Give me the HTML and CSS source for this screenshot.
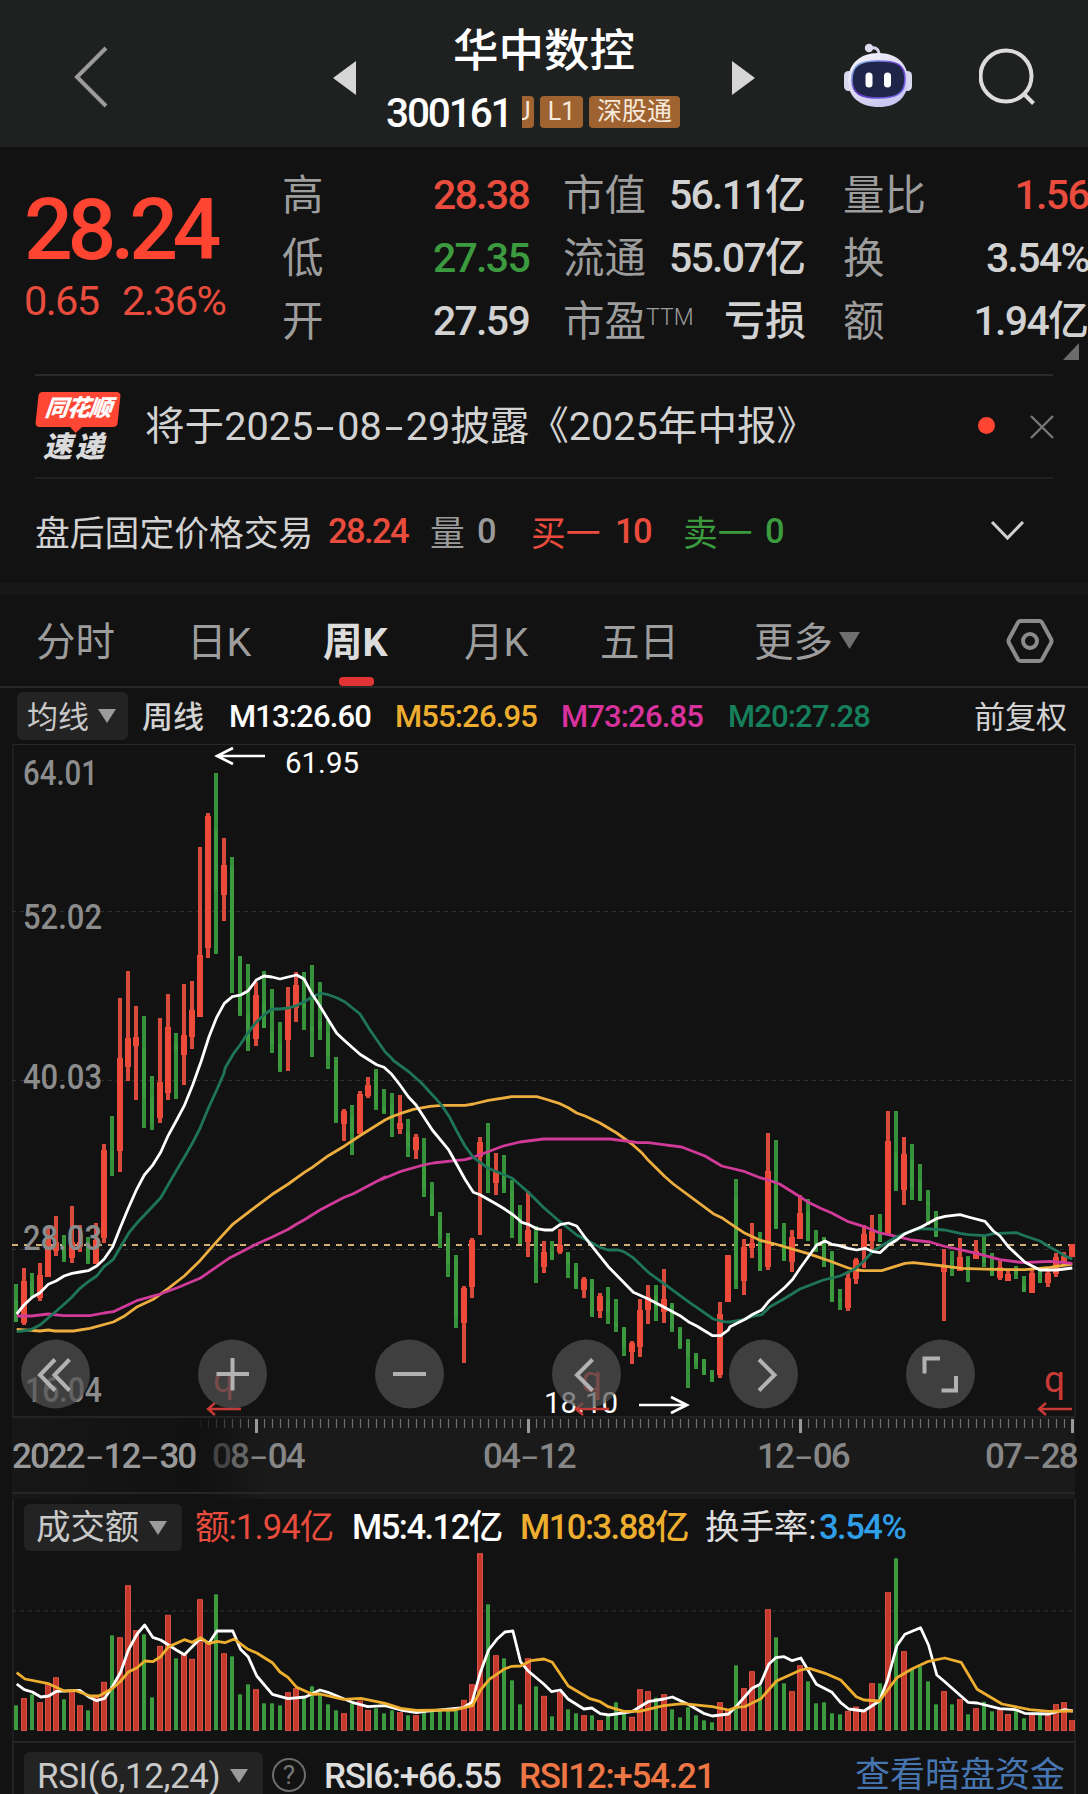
FILE: index.html
```html
<!DOCTYPE html>
<html lang="zh-CN">
<head>
<meta charset="utf-8">
<title>华中数控 300161</title>
<link rel="stylesheet" href="styles.css">
</head>
<body>
<header class="topbar">
  <div class="topbar-left">
    <svg class="back" width="38" height="64" viewBox="0 0 38 64"><path d="M34 3 5 32 34 61"/></svg>
  </div>
  <div class="topbar-center">
    <svg width="23" height="34" viewBox="0 0 23 34"><path d="M23 0V34L0 17Z" fill="#d6d6d6"/></svg>
    <div class="stock">
      <h1>华中数控</h1>
      <div class="stock-sub"><span class="code">300161</span><span class="tag tag-cut">J</span><span class="tag tag-l1">L1</span><span class="tag tag-sz">深股通</span></div>
    </div>
    <svg width="23" height="34" viewBox="0 0 23 34"><path d="M0 0V34L23 17Z" fill="#d6d6d6"/></svg>
  </div>
  <div class="topbar-right">
    <svg width="70" height="66" viewBox="0 0 70 66">
      <defs>
        <linearGradient id="shell" x1="0" y1="0" x2="0.6" y2="1"><stop offset="0" stop-color="#f6f5fb"/><stop offset=".6" stop-color="#dcdaf2"/><stop offset="1" stop-color="#c9c6f0"/></linearGradient>
        <linearGradient id="rim" x1="0" y1="0" x2="1" y2="1"><stop offset="0" stop-color="#7fc4e8"/><stop offset=".5" stop-color="#6a35c8"/><stop offset="1" stop-color="#6b6fe8"/></linearGradient>
      </defs>
      <path d="M27 5C33 4 36 6 36 12" fill="none" stroke="#d5d3ea" stroke-width="3"/>
      <circle cx="26" cy="5" r="4.2" fill="#dddaf0"/>
      <rect x="1" y="28" width="9" height="20" rx="4.5" fill="#d9d8ef"/>
      <rect x="60" y="28" width="9" height="20" rx="4.5" fill="#d9d8ef"/>
      <path d="M35 10C54 10 65 21 65 37C65 54 54 64 36 64C17 64 5 54 5 38C5 21 17 10 35 10Z" fill="url(#shell)"/>
      <path d="M35 18C53 18 62 21 62 36C62 51 53 55 36 55C18 55 9 51 9 37C9 21 18 18 35 18Z" fill="#1e2548" stroke="url(#rim)" stroke-width="1.6"/>
      <rect x="22.500" y="29.500" width="7" height="15" rx="3.500" fill="#fff"/>
      <rect x="41" y="29.500" width="7" height="15" rx="3.500" fill="#fff"/>
    </svg>
    <svg width="58" height="58" viewBox="0 0 58 58" fill="none" stroke="#dcdcdc" stroke-width="4"><circle cx="27" cy="28" r="25.500"/><path d="M44.500 45.500 54.500 55.500"/></svg>
  </div>
</header>

<section class="quote">
  <div class="price-box">
    <div class="price">28.24</div>
    <div class="change"><span>0.65</span><span>2.36%</span></div>
  </div>
  <dl class="col col-a">
    <dt>高</dt><dd class="up">28.38</dd>
    <dt>低</dt><dd class="down">27.35</dd>
    <dt>开</dt><dd>27.59</dd>
  </dl>
  <dl class="col col-b">
    <dt>市值</dt><dd>56.11<i>亿</i></dd>
    <dt>流通</dt><dd>55.07<i>亿</i></dd>
    <dt>市盈<sup>TTM</sup></dt><dd><i>亏损</i></dd>
  </dl>
  <dl class="col col-c">
    <dt>量比</dt><dd class="up">1.56</dd>
    <dt>换</dt><dd>3.54%</dd>
    <dt>额</dt><dd>1.94<i>亿</i></dd>
  </dl>
  <svg class="corner" width="16" height="17" viewBox="0 0 16 17"><path d="M16 0V17H0Z" fill="#6c6c6c"/></svg>
</section>

<section class="news">
  <div class="news-logo">
    <div class="logo-top">同花顺</div>
    <div class="logo-bottom">速递</div>
  </div>
  <p>将于2025<b>-</b>08<b>-</b>29披露《2025年中报》</p>
  <span class="dot"></span>
  <svg width="24" height="24" viewBox="0 0 24 24" stroke="#777" stroke-width="2.400"><path d="M1 1 23 23M23 1 1 23"/></svg>
</section>

<section class="after-hours">
  <span>盘后固定价格交易</span><span class="up num">28.24</span><span class="muted">量</span><span class="muted num">0</span><span class="up">买一</span><span class="up num">10</span><span class="down">卖一</span><span class="down num">0</span>
  <svg width="35" height="21" viewBox="0 0 35 21" fill="none" stroke="#d0d0d0" stroke-width="3"><path d="M2 2 17.500 18 33 2"/></svg>
</section>

<div class="divider"></div>

<nav class="tabs">
  <a>分时</a><a>日K</a><a class="active">周K</a><a>月K</a><a>五日</a><a>更多<svg width="21" height="17" viewBox="0 0 21 17"><path d="M0 0H21L10.500 17Z" fill="#6f6f6f"/></svg></a>
  <svg class="gear" width="48" height="44" viewBox="0 0 48 44" fill="none" stroke="#8b8b8b" stroke-width="4"><path d="M14.500 2H33.500Q35 2 36 3.500L45 20Q46 22 45 24L36 40.500Q35 42 33.500 42H14.500Q13 42 12 40.500L3 24Q2 22 3 20L12 3.500Q13 2 14.500 2Z"/><circle cx="24" cy="22" r="7"/></svg>
</nav>

<div class="ma-row">
  <span class="select"><span>均线</span><svg width="18" height="14" viewBox="0 0 18 14"><path d="M0 0H18L9 14Z" fill="#9b9b9b"/></svg></span>
  <span class="period">周线</span>
  <span class="ma white">M13:26.60</span><span class="ma yellow">M55:26.95</span><span class="ma pink">M73:26.85</span><span class="ma teal">M20:27.28</span>
  <span class="adjust">前复权</span>
</div>

<main class="panels">
  <section class="kline">
    <svg id="kline" width="1088" height="674" viewBox="0 744 1088 674"></svg>
    <svg class="controls" width="1088" height="80" viewBox="0 1334 1088 80">
      <g class="discs"><circle cx="55.500" cy="1374" r="34.500"/><circle cx="232.500" cy="1374" r="34.500"/><circle cx="409.500" cy="1374" r="34.500"/><circle cx="586.500" cy="1374" r="34.500"/><circle cx="763.500" cy="1374" r="34.500"/><circle cx="940.500" cy="1374" r="34.500"/></g>
      <g class="glyphs">
        <path d="M55 1359.500 40 1375 55 1390.500M69.500 1359.500 54.500 1375 69.500 1390.500"/>
        <path d="M216.500 1374H249M232.500 1358V1390.500"/>
        <path d="M393 1374H426"/>
        <path d="M592.500 1359.500 577 1375 592.500 1390.500"/>
        <path d="M759 1359.500 774.500 1375 759 1390.500"/>
        <path d="M924.500 1373.500V1358.500H940M956 1376V1390.500H941.500"/>
      </g>
    </svg>
  </section>
  <section class="axis">
    <svg id="ticks" width="1063" height="16" viewBox="12 1417 1063 16"></svg>
    <div class="dates"><span class="start">2022<b>-</b>12<b>-</b>30</span><span class="faded"><i class="dim-2">0</i><i class="dim-1">8</i><b>-</b>04</span><span>04<b>-</b>12</span><span>12<b>-</b>06</span><span>07<b>-</b>28</span></div>
  </section>
  <section class="volume">
    <div class="vol-row">
      <span class="select"><span>成交额</span><svg width="18" height="14" viewBox="0 0 18 14"><path d="M0 0H18L9 14Z" fill="#9b9b9b"/></svg></span>
      <span class="red">额:1.94亿</span><span class="white">M5:4.12亿</span><span class="yellow">M10:3.88亿</span><span class="light">换手率:</span><span class="blue">3.54%</span>
    </div>
    <svg id="volume" width="1088" height="190" viewBox="0 1551 1088 190"></svg>
  </section>
  <section class="rsi">
    <span class="select"><span>RSI(6,12,24)</span><svg width="18" height="14" viewBox="0 0 18 14"><path d="M0 0H18L9 14Z" fill="#9b9b9b"/></svg></span>
    <span class="help">?</span>
    <span class="light rsi6">RSI6:+66.55</span><span class="orange">RSI12:+54.21</span>
    <a class="link">查看暗盘资金</a>
  </section>
</main>
<script src="chart.js"></script>
</body>
</html>
```
FILE: styles.css
```css
* { box-sizing: border-box; margin: 0; padding: 0; }
body {
  width: 1088px; height: 1794px; overflow: hidden;
  background: #121212; color: #d2d2d2;
  font-family: Roboto, "Noto Sans CJK SC", sans-serif;
}
svg { display: block; flex: none; }
span, a, dt, dd { white-space: nowrap; }
i { font-style: normal; }
dd i { letter-spacing: 0; }
.up { color: #e94c3d; }
.down { color: #3b9b3e; }
.muted { color: #9a9a9a; }
.white { color: #fff; }
.yellow { color: #edae2f; }
.pink { color: #d8329c; }
.teal { color: #16805c; }
.red { color: #e94c3d; }
.blue { color: #2f9fe8; }
.light { color: #dedede; }
.orange { color: #ee7544; }

.topbar { height: 147px; background: #1f2120; display: grid; grid-template-columns: 333px 422px 333px; }
.topbar-left { padding: 45px 0 0 72px; }
.back { fill: none; stroke: #9b9b9b; stroke-width: 4; }
.topbar-center { display: flex; justify-content: space-between; padding-top: 61px; }
.stock { width: 310px; margin-top: -35px; }
.stock h1 { font-size: 45.500px; line-height: 52px; font-weight: 500; color: #fff; text-align: center; }
.stock-sub { display: flex; align-items: center; height: 32px; margin: 18px 0 0 -3px; }
.code { font-size: 40.500px; line-height: 32px; color: #fff; width: 136px; letter-spacing: -2.100px; font-weight: 500; margin-top: 1px; }
.tag { height: 32px; background: #9f6331; border-radius: 4px; color: #f6e9dc; font-size: 25px; line-height: 32px; text-align: center; }
.tag-cut { width: 12px; border-radius: 0 4px 4px 0; overflow: hidden; text-indent: -8px; margin-right: 6px; }
.tag-l1 { width: 43px; margin-right: 6px; }
.tag-sz { width: 91px; }
.topbar-right { display: flex; padding: 43px 0 0 88px; gap: 66px; align-items: flex-start; }
.topbar-right svg + svg { margin-top: 5px; }

.quote { height: 227px; display: grid; grid-template-columns: 282px 246px 35px 243px 37px 245px; position: relative; padding-top: 16.500px; }
.price-box { padding-left: 24px; color: #ff4432; }
.price { font-size: 86px; line-height: 66px; font-weight: 500; letter-spacing: -5.500px; margin-top: 33px; }
.change { display: flex; margin-top: 20px; color: #e94c3d; font-size: 41.500px; line-height: 36px; letter-spacing: -1.600px; }
.change span:first-child { width: 98px; }
.col { display: grid; grid-template-columns: 0 1fr; grid-auto-rows: 63px; align-items: center; font-size: 41.500px; line-height: 63px; }
.col-a { grid-column: 2; }
.col-b { grid-column: 4; }
.col-c { grid-column: 6; }
.col dt { color: #9d9d9d; }
.col dd { text-align: right; font-weight: 500; letter-spacing: -1.700px; font-size: 41px; }
.col-a dd { margin-right: -1px; }
.col-c dd { margin-right: -1px; }
.col sup { font-size: 23px; line-height: 20px; font-weight: 300; vertical-align: 11px; }
.corner { position: absolute; left: 1063px; top: 196px; }

.news { height: 105px; margin: 0 35px; border-top: 2px solid #2b2b2b; border-bottom: 2px solid #222; display: flex; align-items: center; }
.news-logo { flex: none; width: 86px; height: 70px; margin-right: 24px; font-weight: 900; font-style: italic; }
.logo-top { position: relative; width: 82px; height: 35px; margin-left: 2px; background: #ff4635; border-radius: 4px; color: #fff; font-size: 23px; line-height: 34px; letter-spacing: -1px; text-align: center; transform: skewX(-6deg); }
.logo-top::after { content: ""; position: absolute; left: 35px; top: 35px; border: 6px solid transparent; border-top-color: #ff4635; border-bottom: 0; }
.logo-bottom { font-size: 29px; line-height: 32px; letter-spacing: 3px; padding: 4px 0 0 8px; color: #dadada; }
.news p { flex: none; width: 806px; font-size: 39.600px; line-height: 60px; white-space: nowrap; }
.news b, .dates b { display: inline-block; width: 24px; text-align: center; font-weight: 400; transform: scaleX(1.700); }
.dot { width: 17px; height: 17px; border-radius: 50%; background: #ff4432; margin: -2px 35px 0 27px; flex: none; }

.after-hours { height: 104px; display: grid; grid-template-columns: 293px 102px 47px 54px 84px 68px 82px 225px 35px; align-items: center; margin-left: 35px; font-size: 34.800px; padding-bottom: 1px; }
.after-hours .num { letter-spacing: -1.600px; font-size: 34.500px; font-weight: 500; }
.divider { height: 12px; background: #171717; }

.tabs { height: 93px; border-bottom: 2px solid #282828; display: grid; grid-template-columns: 151px 136px 141px 136px 154px 252px 48px; align-items: center; padding-left: 36px; font-size: 39.500px; color: #9d9d9d; }
.tabs a { position: relative; height: 91px; line-height: 91px; padding-top: 4px; display: flex; align-items: center; }
.tabs a svg { margin: -5px 0 0 6px; }
.gear { margin-top: 1px; }
.tabs .active { color: #dcdcdc; font-weight: 700; }
.tabs .active::after { content: ""; position: absolute; left: 16px; bottom: 0; width: 35px; height: 9px; border-radius: 4px; background: #e03434; }

.ma-row { height: 56px; display: grid; grid-template-columns: 125px 87px 166px 166px 167px 246px auto; align-items: center; padding-left: 17px; font-size: 31px; }
.select { display: flex; align-items: center; justify-content: space-between; background: #232323; border-radius: 6px; height: 48px; color: #c8c8c8; }
.ma-row .select { width: 111px; padding: 0 12px 0 10px; }
.ma-row .select span, .period, .adjust { margin-top: -4px; }
.ma-row .period { font-weight: 500; }
.ma { letter-spacing: -.850px; font-weight: 500; }

.kline { position: relative; height: 674px; }
.controls { position: absolute; left: 0; top: 590px; }
.discs { fill: #525252; fill-opacity: .7; }
.glyphs { fill: none; stroke: #b2b2b2; stroke-width: 4; }
.axis-label { font-size: 34.500px; font-weight: 500; fill: #8c8c8c; }
.mark { font-size: 30px; fill: #fff; }
.event { font-size: 37px; fill: #c93a36; }

.axis { height: 81px; width: 1063px; margin-left: 12px; background: linear-gradient(90deg, #171717 0, #111 185px, #131313 205px, #1a1a1a 255px); }
.dates { display: flex; height: 60px; line-height: 46px; font-size: 35px; font-weight: 500; color: #868686; letter-spacing: -2px; border-bottom: 2px solid #262626; }
.dates b { width: 20px; text-indent: -1px; }
.dates span { flex: none; width: 91px; margin-right: 183px; }
.dates .start { width: 184px; margin-right: 16px; color: #999; }
.dates .faded { margin-right: 180px; }
.dates span:last-child { margin: 0 0 0 -46px; }
.dim-2 { color: #444; }
.dim-1 { color: #646464; }

.volume { height: 242px; }
.vol-row { height: 52px; width: 1064px; margin-left: 12px; border: solid #222; border-width: 0 2px; display: grid; grid-template-columns: 171px 157px 168px 185px 114px auto; padding: 5px 0 0 10px; font-size: 34.500px; line-height: 47px; }
.vol-row .select { width: 158px; height: 47px; padding: 0 15px 0 12px; }
.vol-row > span { letter-spacing: -1.500px; font-weight: 500; }
.vol-row > .select, .vol-row > .light { letter-spacing: -.100px; font-weight: 400; }
.vol-row > .red { letter-spacing: -.900px; font-weight: 400; }

.rsi { height: 53px; width: 1064px; margin-left: 12px; border: 2px solid #242424; border-bottom: 0; display: flex; padding: 9px 0 0 10px; font-size: 35px; line-height: 49px; }
.rsi .select { width: 239px; padding: 0 15px 0 13px; letter-spacing: -.400px; }
.help { width: 34px; height: 34px; border: 2px solid #6c6c6c; border-radius: 50%; color: #777; font-size: 26px; line-height: 31px; text-align: center; margin: 6px 18px 0 9px; }
.rsi .rsi6, .rsi .orange { width: 195px; letter-spacing: -1.300px; font-weight: 500; }
.rsi .orange { width: 336px; }
.rsi .link { color: #4775b0; margin-top: -1px; }
```
FILE: chart.js
```js
const RED = '#ee4a39', GREEN = '#3b9b3e', STEP = 8, X0 = 16;

// One weekly candle per entry: colour, high, body top, body bottom, low (chart y).
const candles = `G1284,1300,1322,1322 R1268,1281,1323,1325 G1273,1281,1295,1297 R1263,1275,1298,1301 R1227,1237,1277,1277 R1216,1242,1251,1256 G1235,1250,1259,1262 R1206,1242,1258,1263 R1225,1242,1247,1252 G1237,1243,1260,1264
R1223,1240,1264,1264 R1144,1150,1238,1243 G1116,1151,1159,1176 R998,1058,1151,1172 R971,1038,1067,1081 R1006,1037,1046,1100 G1016,1049,1098,1128 G1076,1097,1122,1130 R1018,1082,1118,1123 R994,1027,1093,1100
G1033,1042,1050,1099 R984,1035,1055,1085 R981,1010,1037,1049 R847,955,1017,1017 R813,816,948,958 G773,830,891,954 R838,865,895,921 G857,866,960,993 G956,956,1014,1016 G964,1014,1042,1051
R982,995,1039,1046 G971,1002,1028,1028 G989,1031,1044,1053 G1022,1044,1070,1072 R987,1007,1040,1071 R972,985,1008,1022 G972,999,1008,1030 G965,1027,1031,1057 G982,1021,1029,1040 G1020,1033,1056,1069
G1057,1060,1121,1123 R1109,1111,1124,1141 G1105,1117,1133,1155 R1091,1094,1134,1134 R1077,1085,1096,1098 G1069,1072,1107,1110 G1089,1107,1112,1114 G1093,1103,1119,1137 R1095,1123,1129,1134 G1119,1132,1147,1157
R1134,1137,1150,1159 G1138,1166,1190,1197 G1182,1194,1216,1216 G1212,1217,1238,1248 G1233,1238,1264,1277 G1255,1258,1318,1328 R1286,1288,1323,1363 R1238,1240,1287,1298 R1137,1142,1157,1235 G1123,1152,1168,1193
R1153,1172,1183,1195 G1155,1173,1189,1193 G1180,1191,1217,1238 G1205,1212,1242,1244 R1191,1230,1242,1257 G1226,1232,1262,1283 R1241,1252,1267,1273 G1241,1251,1258,1260 R1229,1245,1252,1254 G1252,1253,1265,1278
G1263,1269,1287,1289 R1277,1279,1290,1298 G1279,1281,1315,1317 R1293,1296,1311,1318 G1287,1300,1313,1324 G1299,1322,1327,1332 G1327,1329,1347,1356 R1341,1343,1352,1364 R1299,1310,1347,1357 R1285,1297,1310,1324
G1285,1295,1307,1321 R1269,1299,1312,1323 G1303,1305,1329,1332 G1327,1329,1347,1349 G1339,1342,1357,1388 G1353,1355,1364,1369 G1359,1361,1374,1375 G1370,1372,1379,1382 R1302,1314,1375,1378 R1255,1255,1302,1302
G1179,1198,1280,1289 R1239,1247,1281,1295 R1223,1243,1248,1258 G1232,1244,1270,1271 R1133,1171,1267,1270 G1140,1186,1228,1229 G1223,1242,1260,1261 R1230,1237,1262,1272 R1195,1213,1239,1239 G1199,1212,1240,1241
G1230,1242,1245,1252 G1237,1246,1257,1267 G1251,1253,1301,1302 G1289,1299,1302,1310 R1271,1278,1308,1311 R1258,1260,1279,1284 R1225,1234,1250,1268 R1215,1231,1241,1252 G1214,1231,1242,1242 R1111,1141,1234,1234
G1111,1152,1189,1191 R1137,1154,1190,1205 G1144,1160,1187,1200 G1164,1181,1200,1201 G1190,1202,1205,1225 G1211,1217,1236,1237 R1249,1267,1272,1321 G1251,1260,1264,1276 R1238,1257,1271,1271 G1256,1258,1270,1282
R1240,1251,1259,1259 G1236,1257,1263,1267 G1253,1267,1275,1276 R1261,1267,1278,1280 R1269,1274,1281,1281 G1266,1271,1274,1279 G1276,1282,1291,1292 R1269,1273,1293,1293 G1269,1271,1283,1283 R1271,1273,1283,1287
R1253,1257,1274,1277 R1252,1256,1263,1264 R1244,1244,1257,1257`.split(/\s+/);

// Bar heights in thirds of a pixel, oldest week first.
const volumes = [74,97,107,85,142,160,92,120,76,59,102,146,284,280,436,301,287,98,254,347,215,230,215,394,262,407,232,221,107,137,124,80,80,74,115,127,97,131,112,77,59,52,80,90,62,65,50,59,55,44,46,59,59,59,59,59,92,139,532,377,226,215,149,77,217,131,104,41,115,62,50,46,44,31,44,83,52,41,124,118,97,109,62,38,68,44,29,23,85,62,194,127,178,132,364,278,140,118,196,146,80,83,50,47,59,72,59,142,140,415,515,238,182,191,146,77,118,77,94,47,67,85,56,62,49,62,35,49,49,46,79,85,31];

// Curves, traced in three windows; each window has its own origin and scale.
const W = { top: [0, 740, 1/3, 1/3], left: [0, 1060, 1/3, 1/3], mid: [380, 1060, 1/3, 1/3], right: [730, 1060, 1/3, 1/3], volL: [0, 1480, .347, 1/3], volR: [544, 1480, .347, 1/3] };
const averages = [
  ['#fff', ['left', '50,762 72,735 97,712 120,698 145,673 168,663 192,648 216,640 240,636 265,632 290,618 312,598 338,560 360,505 385,445 410,388 433,345 457,317 482,277 505,226 530,180 553,137 578,75'],
    ['top', '603,965 627,890 650,832 673,790 697,770 722,765 745,752 769,720 792,708 816,711 840,717 864,711 890,705 912,717 935,760 958,795 984,838 1010,880 1035,903 1080,943 1130,974'],
    ['mid', '12,22 35,43 60,75 85,110 108,135 157,210 205,268 230,313 255,358 280,397 300,404 350,433 375,448 400,465 425,487 445,493 470,506 495,510 517,510 540,494 565,489 590,498 612,528 637,560 685,620 760,697 805,717 850,740 900,767 925,785 950,798 998,827 1022,827 1045,810'],
    ['right', '0,800 45,778 70,762 95,750 118,722 165,682 188,658 210,625 235,590 260,555 285,543 305,553 325,556 355,565 380,570 405,565 430,575 450,578 475,555 500,540 525,521 575,500 622,475 645,469 690,464 715,471 765,484 790,513 810,528 835,560 885,607 930,630 980,630 1027,624']],
  ['#edae3f', ['left', '50,808 120,813 145,810 165,813 220,813 270,805 340,786 375,767 412,740 460,718 505,685 553,648 600,602 650,545 697,494 745,457 817,403 865,372 912,338 937,322 985,287 1035,257 1083,225 1155,180'],
    ['mid', '35,170 60,161 100,148 150,139 185,136 255,136 280,132 325,121 395,110 470,110 495,117 540,131 565,143 590,159 615,168 660,189 710,219 758,254 785,278 805,301 855,350 880,372 1000,461 1025,473'],
    ['right', '0,490 45,520 90,541 135,552 235,581 285,598 355,624 380,630 400,632 455,632 525,610 550,608 640,618 695,625 790,628 885,629 960,622 1027,612']],
  ['#d03a98', ['left', '50,768 95,768 145,762 190,767 270,767 312,759 340,755 410,722 475,704 530,684 600,655 690,593 770,552 817,531 865,508 890,492 912,480 960,450 1030,413 1060,401 1155,351'],
    ['mid', '0,360 60,335 130,315 160,309 230,301 255,299 280,292 370,258 420,246 490,237 690,237 775,248 805,248 850,254 905,261 975,288 1025,318'],
    ['right', '0,324 45,335 90,353 115,360 150,373 210,410 235,427 270,444 305,459 355,485 400,499 450,519 475,524 545,540 600,546 640,558 740,580 810,599 880,608 960,604 1027,610']],
  ['#1f7559', ['left', '50,815 90,810 120,795 155,765 190,735 215,712 240,685 265,665 290,648 312,620 340,598 362,560 387,518 410,490 457,440 482,413 530,330 553,292 577,250 600,205 625,145 650,90 672,40'],
    ['top', '675,985 700,942 722,912 745,877 770,845 795,822 817,807 840,807 865,804 890,797 915,784 940,769 963,760 985,764 1010,773 1035,786 1080,822 1110,870 1155,935 1178,958'],
    ['mid', '38,0 90,38 125,70 165,113 188,140 208,170 230,213 255,258 280,292 325,325 350,335 397,355 420,375 445,397 490,442 540,485 590,525 615,538 660,562 685,570 715,570 735,577 758,592 805,637 830,655 875,688 925,725 950,742 1000,777 1030,785'],
    ['right', '0,786 45,778 70,768 95,764 120,740 165,715 210,687 280,660 330,648 375,627 400,605 430,572 450,560 475,545 500,530 525,520 550,510 575,506 600,507 645,510 690,520 715,524 765,527 790,521 860,518 885,528 930,543 960,562 985,575 1005,588 1027,597']]
];
const volumeAverages = [
  ['#fff', ['volL', '48,612 70,629 93,636 118,651 140,648 163,634 230,631 255,650 278,662 302,655 325,618 348,575 370,510 395,462 417,435 440,472 463,480 508,510 531,524 554,500 578,475 602,490 625,453 671,453 693,508 715,530 740,588 785,643 830,656 880,651 922,630 945,637 1015,667 1060,680 1110,677 1155,690 1200,698 1225,694 1335,683 1360,667 1385,575 1408,510 1432,478 1455,456 1478,453 1500,545 1523,574'],
    ['volR', '0,613 22,635 47,630 70,658 115,687 138,684 162,701 187,705 253,695 300,665 345,657 370,651 415,673 460,700 485,708 532,702 555,678 600,625 623,613 648,552 668,533 692,530 715,542 740,534 785,613 830,637 855,668 878,687 922,693 967,663 990,600 1017,497 1040,463 1085,443 1108,495 1132,585 1155,605 1222,667 1248,669 1313,686 1360,689 1385,700 1455,702 1500,689 1524,693']],
  ['#edae2f', ['volL', '48,578 72,597 140,611 185,633 215,631 260,648 285,648 325,625 348,603 370,576 395,563 417,543 440,545 463,530 486,500 531,479 554,487 578,473 602,491 625,484 648,488 675,477 715,508 740,519 785,548 807,576 830,592 855,622 900,643 922,642 990,658 1040,655 1110,670 1155,685 1200,691 1310,690 1362,677 1385,630 1410,598 1455,566 1475,559 1500,558 1530,542'],
    ['volR', '0,537 24,547 70,618 130,655 162,665 185,680 230,694 275,694 345,677 400,671 485,680 532,690 555,682 578,680 625,656 670,603 740,570 765,565 810,580 855,600 900,650 922,660 967,663 1017,593 1060,567 1108,544 1155,534 1202,547 1248,628 1320,672 1400,689 1455,694 1524,693']]
];

const curve = ([color, ...parts]) => {
  const pts = parts.flatMap(([w, s]) => s.split(' ').map(p => {
    const [x, y] = p.split(',').map(Number), [ox, oy, kx, ky] = W[w];
    return (ox + x * kx).toFixed(1) + ',' + (oy + y * ky).toFixed(1);
  }));
  return `<polyline points="${pts.join(' ')}" fill="none" stroke="${color}" stroke-width="2.8" stroke-linejoin="round"/>`;
};
const rect = (x, y, w, h, fill) => `<rect x="${x}" y="${y}" width="${w}" height="${h}" fill="${fill}"/>`;
const line = (d, stroke, w, dash) => `<path d="${d}" fill="none" stroke="${stroke}" stroke-width="${w}"${dash ? ` stroke-dasharray="${dash}"` : ''}/>`;
const label = (x, y, w, cls, s) => `<text x="${x}" y="${y}" textLength="${w}" lengthAdjust="spacingAndGlyphs" class="${cls}">${s}</text>`;

const up = i => candles[i][0] === 'R';

let k = line('M12 744H1075', '#282828', 2) + line('M13 744V1417M1075 744V1417', '#242424', 1.6) + line('M12 1417H1075', '#242424', 2);
for (const y of [911.5, 1080.5, 1249.5]) k += line(`M12 ${y}H1074`, '#303030', 1, '4 4');
k += line('M12 1245H1074', '#d0b077', 1.8, '6 6');
candles.forEach((c, i) => {
  const [hi, top, bottom, lo] = c.slice(1).split(',').map(Number), x = X0 + i * STEP, w = up(i) ? 6 : 4;
  k += rect(x - 2, hi, 4, lo - hi, up(i) ? '#d94a3c' : '#37903a') + rect(x - w / 2, top, w, bottom - top, up(i) ? RED : GREEN);
});
[1, 2, 3, 0].forEach(n => { k += curve(averages[n]); });
[[785, '64.01', 23, 75], [929, '52.02', 23, 79], [1089, '40.03', 23, 79], [1250, '28.03', 23, 79], [1402, '16.04', 25, 77]].forEach(([y, s, x, w]) => { k += label(x, y, w, 'axis-label', s); });
k += label(285, 773, 74, 'mark', '61.95') + line('M265 756H217M233 748 217 756 233 764', '#fff', 2.6);
k += label(544, 1413, 74, 'mark', '18.10') + line('M639 1405H687M671 1397 687 1405 671 1413', '#fff', 2.6);
[208, 576, 1039].forEach(x => {
  k += `<text x="${x + 5}" y="1392" class="event">q</text>` + line(`M${x + 33} 1409H${x}M${x + 7} 1403 ${x} 1409 ${x + 7} 1415`, '#c93a36', 2.4);
});
document.getElementById('kline').innerHTML = k;

let t = '';
for (let i = 23; i <= 132; i++) {
  const major = [30, 64, 98, 132].includes(i), x = X0 + i * STEP;
  t += line(`M${x + .500} 1418V${major ? 1432 : 1427}`, major ? '#999' : `rgba(110,110,110,${Math.min(1, (i - 22) / 8)})`, major ? 3 : 1.2);
}
document.getElementById('ticks').innerHTML = t;

let v = line('M13 1551V1741M1075 1551V1741', '#242424', 1.6) + line('M12 1611H1075', '#2a2a2a', 1.5, '4 4') + rect(12, 1728, 1062, 2, '#0d200d');
volumes.forEach((n, i) => {
  const h = n / 3, x = X0 + i * STEP;
  v += up(i) ? `<rect x="${x - 2.500}" y="${1731 - h}" width="5" height="${h - .500}" fill="#c63a2e" stroke="#d84f43" stroke-width="1"/>` : rect(x - 2, 1730 - h, 4, h, GREEN);
});
volumeAverages.forEach(a => { v += curve(a); });
document.getElementById('volume').innerHTML = v;
```
